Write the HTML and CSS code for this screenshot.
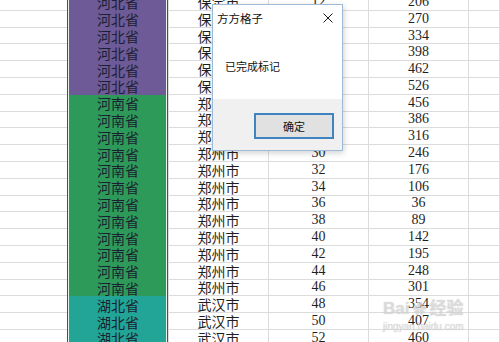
FILE: index.html
```html
<!DOCTYPE html>
<html lang="zh-CN">

<head>
    <meta charset="UTF-8">
    <title>方方格子 - 标记</title>
    <link rel="stylesheet" href="styles.css">
</head>

<body>
    <div class="sheet">
        <div class="row"><div class="cell col-a"></div><div class="cell col-b purple">河北省</div><div class="cell col-c">保定市</div><div class="cell col-d">12</div><div class="cell col-e">206</div><div class="cell col-f"></div></div>
        <div class="row"><div class="cell col-a"></div><div class="cell col-b purple">河北省</div><div class="cell col-c">保定市</div><div class="cell col-d">14</div><div class="cell col-e">270</div><div class="cell col-f"></div></div>
        <div class="row"><div class="cell col-a"></div><div class="cell col-b purple">河北省</div><div class="cell col-c">保定市</div><div class="cell col-d">16</div><div class="cell col-e">334</div><div class="cell col-f"></div></div>
        <div class="row"><div class="cell col-a"></div><div class="cell col-b purple">河北省</div><div class="cell col-c">保定市</div><div class="cell col-d">18</div><div class="cell col-e">398</div><div class="cell col-f"></div></div>
        <div class="row"><div class="cell col-a"></div><div class="cell col-b purple">河北省</div><div class="cell col-c">保定市</div><div class="cell col-d">20</div><div class="cell col-e">462</div><div class="cell col-f"></div></div>
        <div class="row"><div class="cell col-a"></div><div class="cell col-b purple">河北省</div><div class="cell col-c">保定市</div><div class="cell col-d">22</div><div class="cell col-e">526</div><div class="cell col-f"></div></div>
        <div class="row"><div class="cell col-a"></div><div class="cell col-b green">河南省</div><div class="cell col-c">郑州市</div><div class="cell col-d">24</div><div class="cell col-e">456</div><div class="cell col-f"></div></div>
        <div class="row"><div class="cell col-a"></div><div class="cell col-b green">河南省</div><div class="cell col-c">郑州市</div><div class="cell col-d">26</div><div class="cell col-e">386</div><div class="cell col-f"></div></div>
        <div class="row"><div class="cell col-a"></div><div class="cell col-b green">河南省</div><div class="cell col-c">郑州市</div><div class="cell col-d">28</div><div class="cell col-e">316</div><div class="cell col-f"></div></div>
        <div class="row"><div class="cell col-a"></div><div class="cell col-b green">河南省</div><div class="cell col-c">郑州市</div><div class="cell col-d">30</div><div class="cell col-e">246</div><div class="cell col-f"></div></div>
        <div class="row"><div class="cell col-a"></div><div class="cell col-b green">河南省</div><div class="cell col-c">郑州市</div><div class="cell col-d">32</div><div class="cell col-e">176</div><div class="cell col-f"></div></div>
        <div class="row"><div class="cell col-a"></div><div class="cell col-b green">河南省</div><div class="cell col-c">郑州市</div><div class="cell col-d">34</div><div class="cell col-e">106</div><div class="cell col-f"></div></div>
        <div class="row"><div class="cell col-a"></div><div class="cell col-b green">河南省</div><div class="cell col-c">郑州市</div><div class="cell col-d">36</div><div class="cell col-e">36</div><div class="cell col-f"></div></div>
        <div class="row"><div class="cell col-a"></div><div class="cell col-b green">河南省</div><div class="cell col-c">郑州市</div><div class="cell col-d">38</div><div class="cell col-e">89</div><div class="cell col-f"></div></div>
        <div class="row"><div class="cell col-a"></div><div class="cell col-b green">河南省</div><div class="cell col-c">郑州市</div><div class="cell col-d">40</div><div class="cell col-e">142</div><div class="cell col-f"></div></div>
        <div class="row"><div class="cell col-a"></div><div class="cell col-b green">河南省</div><div class="cell col-c">郑州市</div><div class="cell col-d">42</div><div class="cell col-e">195</div><div class="cell col-f"></div></div>
        <div class="row"><div class="cell col-a"></div><div class="cell col-b green">河南省</div><div class="cell col-c">郑州市</div><div class="cell col-d">44</div><div class="cell col-e">248</div><div class="cell col-f"></div></div>
        <div class="row"><div class="cell col-a"></div><div class="cell col-b green">河南省</div><div class="cell col-c">郑州市</div><div class="cell col-d">46</div><div class="cell col-e">301</div><div class="cell col-f"></div></div>
        <div class="row"><div class="cell col-a"></div><div class="cell col-b teal">湖北省</div><div class="cell col-c">武汉市</div><div class="cell col-d">48</div><div class="cell col-e">354</div><div class="cell col-f"></div></div>
        <div class="row"><div class="cell col-a"></div><div class="cell col-b teal">湖北省</div><div class="cell col-c">武汉市</div><div class="cell col-d">50</div><div class="cell col-e">407</div><div class="cell col-f"></div></div>
        <div class="row"><div class="cell col-a"></div><div class="cell col-b teal">湖北省</div><div class="cell col-c">武汉市</div><div class="cell col-d">52</div><div class="cell col-e">460</div><div class="cell col-f"></div></div>

        <!-- selected column B -->
        <div class="selection"></div>
    </div>

    <!-- message box -->
    <div class="dialog">
        <div class="dialog-title">
            <span>方方格子</span>
            <svg class="close" width="10" height="10" viewBox="0 0 10 10">
                <path d="M0.5 0.5 L9.5 9.5 M9.5 0.5 L0.5 9.5" stroke="#1a1a1a" stroke-width="1" fill="none" />
            </svg>
        </div>
        <div class="dialog-body">已完成标记</div>
        <div class="dialog-footer">
            <button class="ok">确定</button>
        </div>
    </div>

    <div class="watermark">
        <div class="wm-logo">Bai<span class="paw">&#10047;</span>经验</div>
        <div class="wm-url">jingyan.baidu.com</div>
    </div>
</body>

</html>
```

FILE: styles.css
```css
body {
    margin: 0;
    padding: 0;
    width: 500px;
    height: 342px;
    overflow: hidden;
    position: relative;
    background: #fff;
    font-family: 'Liberation Serif', 'Noto Sans CJK SC', serif;
    color: #1f1f1f;
}

.sheet {
    position: relative;
    margin-top: -6px;
}

.row {
    display: flex;
    height: 16.8px;
}

.cell {
    box-sizing: border-box;
    height: 100%;
    border-right: 1px solid #dcdcdc;
    border-bottom: 1px solid #dcdcdc;
    display: flex;
    align-items: center;
    justify-content: center;
    font-size: 14px;
    white-space: nowrap;
    flex-shrink: 0;
}

.col-a {
    width: 68px;
}

.col-b {
    width: 100px;
    border: none;
    color: #1b1f30;
}

.col-c {
    width: 101px;
    border-left: 1px solid #dcdcdc;
}

.col-d {
    width: 100px;
}

.col-e {
    width: 100px;
}

.col-f {
    width: 31px;
}

.purple {
    background: #6d5a97;
}

.green {
    background: #2e9a5a;
}

.teal {
    background: #22a596;
}

.selection {
    position: absolute;
    top: -2px;
    bottom: -2px;
    left: 67px;
    width: 101px;
    box-sizing: border-box;
    border: 1px solid #1d6b40;
    box-shadow: inset 0 0 0 1px #e8f3ec;
    pointer-events: none;
}

.dialog {
    position: absolute;
    left: 212px;
    top: 4px;
    width: 131px;
    height: 147px;
    box-sizing: border-box;
    border: 1px solid #9fbad6;
    background: #fff;
    box-shadow: 1px 2px 6px rgba(0, 0, 0, 0.18);
    display: flex;
    flex-direction: column;
    font-family: 'Noto Sans CJK SC', sans-serif;
    font-size: 11px;
    color: #111;
}

.dialog-title {
    height: 26px;
    display: flex;
    align-items: center;
    justify-content: space-between;
    padding: 0 9px 0 4px;
    font-size: 11.5px;
}

.close {
    display: block;
}

.dialog-body {
    flex: 1;
    padding: 27px 0 0 12px;
}

.dialog-footer {
    height: 51px;
    background: #f0f0f0;
    display: flex;
    justify-content: flex-end;
    padding: 14px 8px 0 0;
    box-sizing: border-box;
}

.ok {
    width: 80px;
    height: 26px;
    box-sizing: border-box;
    border: 2px solid #3f83c0;
    background: #e1e1e1;
    font-family: 'Noto Sans CJK SC', sans-serif;
    font-size: 11px;
    color: #111;
    padding: 0;
}

.watermark {
    position: absolute;
    left: 383px;
    top: 300px;
    color: rgba(225, 225, 225, 0.7);
    text-shadow: 0 0 1px rgba(150, 150, 150, 0.5);
    pointer-events: none;
}

.wm-logo {
    font-family: 'Liberation Sans', 'Noto Sans CJK SC', sans-serif;
    font-size: 17px;
    font-weight: bold;
    line-height: 17px;
}

.paw {
    font-size: 14px;
    margin: 0 3px;
}

.wm-url {
    font-family: 'Liberation Sans', sans-serif;
    font-size: 10px;
    line-height: 11px;
    margin-top: 3px;
}
```
